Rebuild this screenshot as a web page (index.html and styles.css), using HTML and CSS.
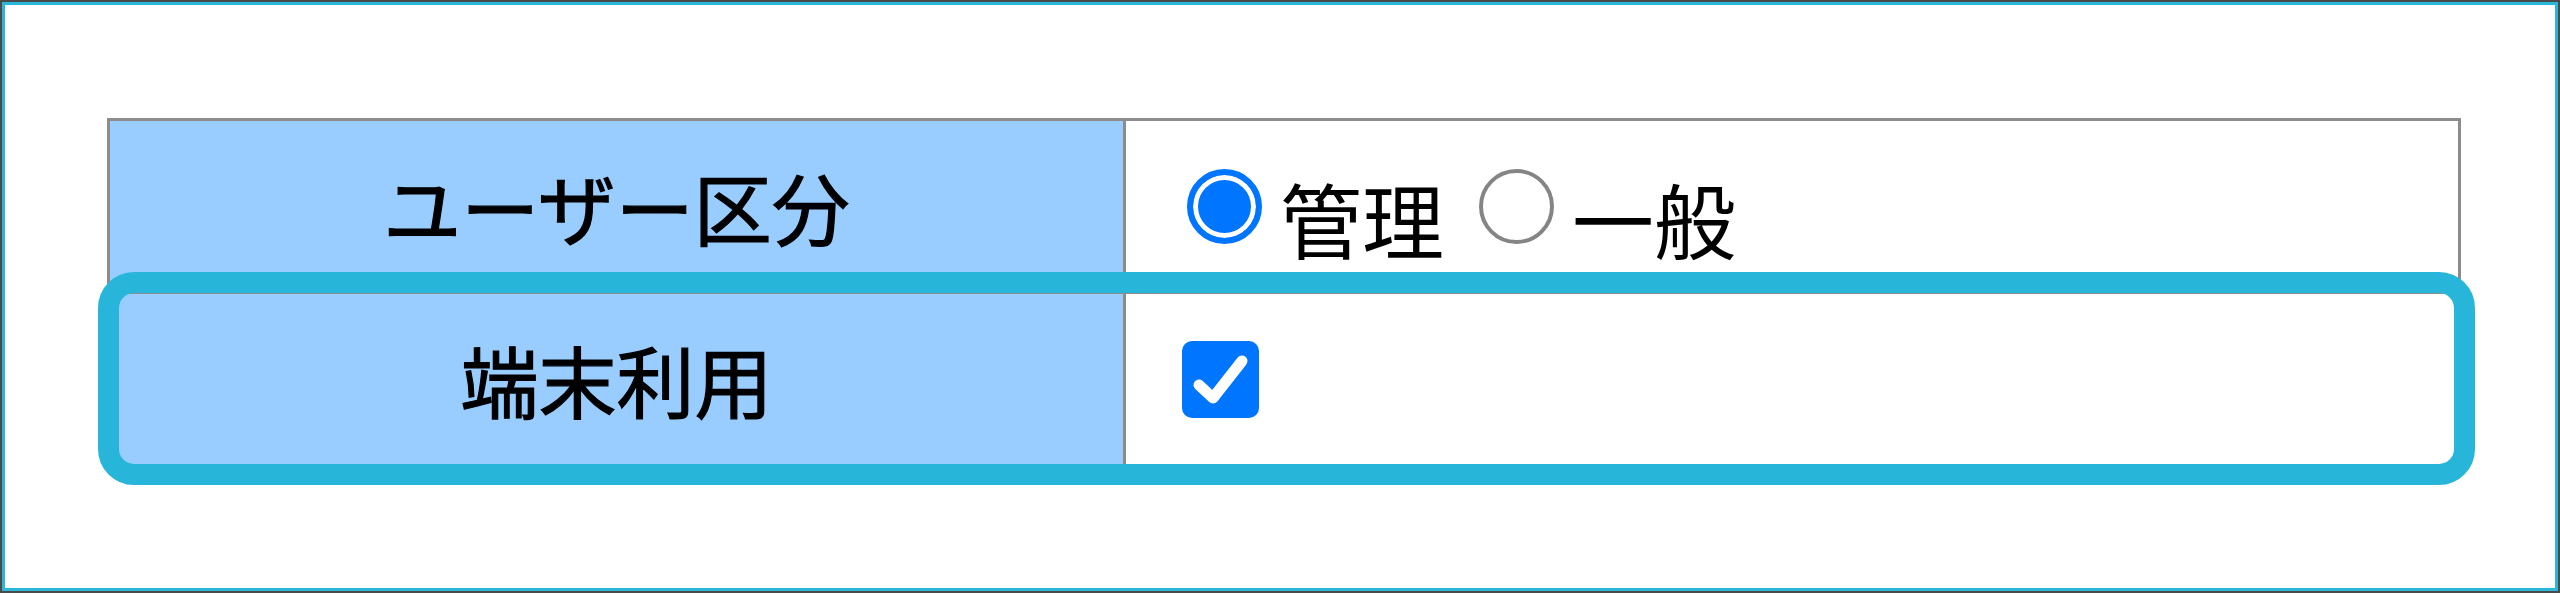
FILE: index.html
```html
<!DOCTYPE html>
<html lang="ja">
<head>
    <meta charset="UTF-8">
    <meta name="viewport" content="width=device-width, initial-scale=1.0">
    <title>ユーザー設定</title>
    <link rel="stylesheet" href="styles.css">
</head>
<body>
    <!-- 外枠 -->
    <div class="frame">
        <div class="screen">
            <div class="table-wrap">
                <table class="settings">
                    <tr>
                        <th>ユーザー区分</th>
                        <td>
                            <div class="options">
                                <label class="option">
                                    <input type="radio" name="kubun" checked>
                                    <span class="option-text">管理</span>
                                </label>
                                <label class="option">
                                    <input type="radio" name="kubun">
                                    <span class="option-text">一般</span>
                                </label>
                            </div>
                        </td>
                    </tr>
                    <tr>
                        <th>端末利用</th>
                        <td>
                            <label class="check">
                                <input type="checkbox" checked>
                                <svg class="check-mark" viewBox="0 0 77 77" aria-hidden="true">
                                    <path d="M17 44 L31 57 L60 20" fill="none" stroke="#fff" stroke-width="11" stroke-linecap="round" stroke-linejoin="round"/>
                                </svg>
                            </label>
                        </td>
                    </tr>
                </table>
                <!-- 強調枠 -->
                <div class="highlight"></div>
            </div>
        </div>
    </div>
</body>
</html>
```

FILE: styles.css
```css
/* ページ全体 */
body {
    margin: 0;
    font-family: "Noto Sans CJK JP", "Noto Sans", sans-serif;
    color: #000;
    background: #fff;
}

/* 外枠（濃いグレー＋水色） */
.frame {
    width: 2560px;
    height: 593px;
    box-sizing: border-box;
    border: 2px solid #4a4a4a;
}

.screen {
    height: 100%;
    box-sizing: border-box;
    border: 3px solid #2ab7d8;
    padding: 113px 94px 0 102px;
}

.table-wrap {
    position: relative;
}

/* 設定テーブル */
.settings {
    width: 100%;
    border-collapse: collapse;
    table-layout: fixed;
}

.settings th,
.settings td {
    border: 3px solid #8c8c8c;
    height: 170px;
    padding: 0;
}

.settings th {
    width: 1013px;
    background-color: #9cf;
    font-size: 78px;
    font-weight: normal;
    -webkit-text-stroke: 1.2px #000;
    line-height: 1;
    text-align: center;
}

.settings td {
    padding-left: 56px;
    background: #fff;
}

/* ラジオボタン */
.options {
    display: flex;
    align-items: center;
    gap: 30px;
}

.option {
    display: flex;
    align-items: center;
    gap: 18px;
}

.option input {
    appearance: none;
    width: 75px;
    height: 75px;
    margin: 0 0 0 5px;
    box-sizing: border-box;
    border: 4px solid #858585;
    border-radius: 50%;
    background: #fff;
}

.option input:checked {
    border: 6px solid #0075ff;
    background: #0075ff;
    box-shadow: inset 0 0 0 5px #fff;
}

.option-text {
    font-size: 82px;
    line-height: 1;
    padding-top: 24px;
}

/* チェックボックス */
.check {
    position: relative;
    display: block;
    width: 77px;
    height: 77px;
}

.check input {
    appearance: none;
    display: block;
    width: 77px;
    height: 77px;
    margin: 0;
    border-radius: 10px;
    background: #0075ff;
}

.check-mark {
    position: absolute;
    left: 0;
    top: 0;
    width: 77px;
    height: 77px;
}

/* 強調枠 */
.highlight {
    position: absolute;
    left: -9px;
    top: 154px;
    width: 2377px;
    height: 213px;
    box-sizing: border-box;
    border: 21px solid #27b6d9;
    border-radius: 36px;
    pointer-events: none;
}
```
